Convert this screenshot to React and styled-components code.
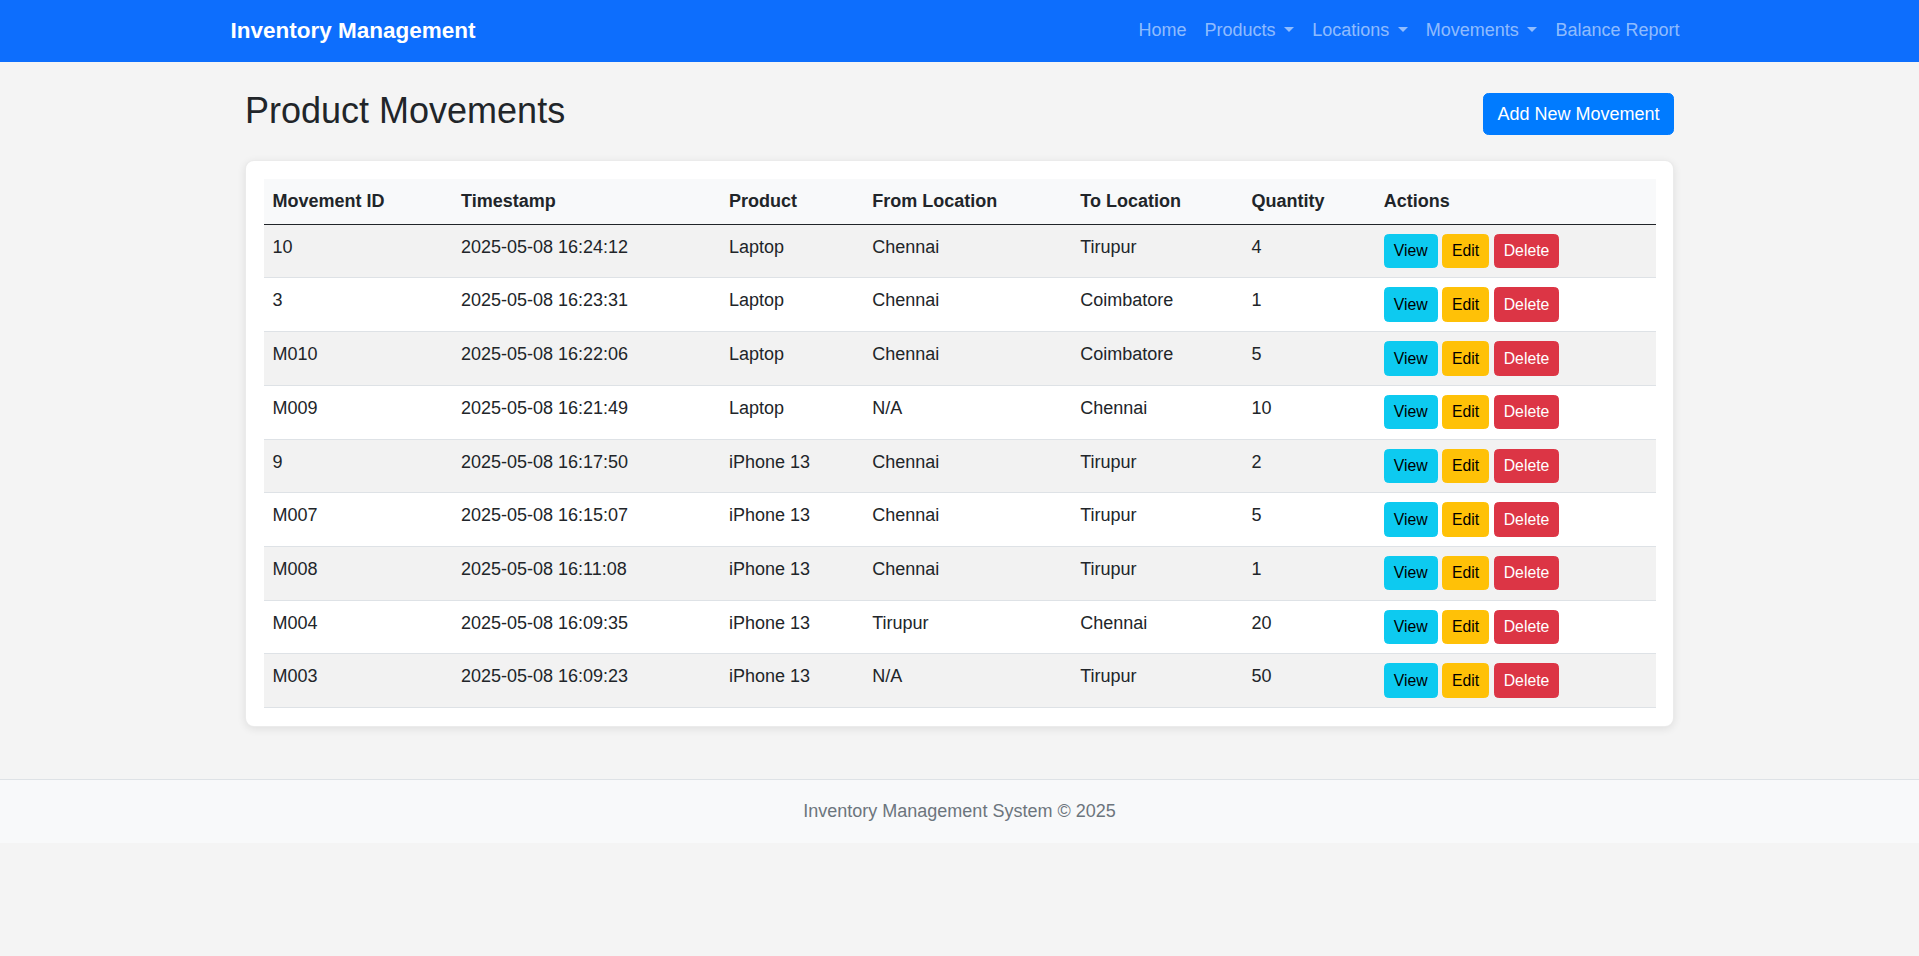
import React from "react";
import styled, { createGlobalStyle } from "styled-components";

const GlobalStyle = createGlobalStyle`
  html, body {
    margin: 0;
    padding: 0;
    background: #f4f4f4;
  }
  body {
    font-family: "Liberation Sans", Arial, sans-serif;
    font-size: 18px;
    line-height: 1.5;
    color: #212529;
  }
  * { box-sizing: border-box; }
`;

const NavBar = styled.nav`
  background: #0d6efd;
  height: 61.6px;
  display: flex;
  align-items: center;
`;

const NavInner = styled.div`
  width: 1485px;
  margin: 0 auto;
  padding: 0 13.5px;
  display: flex;
  align-items: center;
  justify-content: space-between;
`;

const Brand = styled.a`
  color: #fff;
  font-size: 22.5px;
  font-weight: 700;
  line-height: 33.75px;
  padding: 5px 0;
  text-decoration: none;
`;

const NavList = styled.ul`
  list-style: none;
  margin: 0;
  padding: 0;
  display: flex;
`;

const NavLink = styled.a`
  display: block;
  padding: 9px;
  font-size: 18px;
  line-height: 27px;
  color: rgba(255, 255, 255, 0.55);
  text-decoration: none;
  ${(p) =>
    p.$dropdown &&
    `
    &::after {
      content: "";
      display: inline-block;
      margin-left: 8.6px;
      vertical-align: 0.255em;
      border-top: 0.3em solid;
      border-right: 0.3em solid transparent;
      border-left: 0.3em solid transparent;
      border-bottom: 0;
    }
  `}
`;

const Main = styled.main`
  width: 1456px;
  margin: 0 auto;
  padding: 0 13.5px;
`;

const HeaderRow = styled.div`
  margin-top: 27.6px;
  margin-bottom: 24.8px;
  display: flex;
  justify-content: space-between;
  align-items: flex-start;
`;

const Title = styled.h2`
  margin: 0;
  font-size: 36px;
  line-height: 43.2px;
  font-weight: 500;
  color: #212529;
`;

const PrimaryButton = styled.button`
  margin-top: 4.2px;
  font-family: inherit;
  font-size: 18px;
  line-height: 27px;
  padding: 6.5px 13.5px;
  border: 1.1px solid #007bff;
  border-radius: 5.5px;
  background: #007bff;
  color: #fff;
  cursor: pointer;
`;

const Card = styled.div`
  background: #fff;
  border: 1px solid rgba(0, 0, 0, 0.08);
  border-radius: 9px;
  box-shadow: 0 2px 8px rgba(0, 0, 0, 0.09);
  padding: 17.6px;
`;

const Table = styled.table`
  width: 100%;
  border-collapse: collapse;
  table-layout: fixed;
  vertical-align: top;
`;

const HeadCell = styled.th`
  text-align: left;
  font-weight: 700;
  padding: 9px;
  line-height: 27px;
  background: #f8f9fa;
  border-bottom: 1px solid #212529;
`;

const Row = styled.tr`
  background: ${(p) => (p.$striped ? "#f2f2f2" : "#fff")};
`;

const Cell = styled.td`
  padding: 9px;
  line-height: 27px;
  vertical-align: top;
  border-bottom: 1px solid #dee2e6;
`;

const Actions = styled.div`
  display: flex;
  gap: 4.5px;
  height: 34.7px;
  align-items: flex-start;
`;

const variants = {
  info: { bg: "#0dcaf0", fg: "#000" },
  warning: { bg: "#ffc107", fg: "#000" },
  danger: { bg: "#dc3545", fg: "#fff" },
};

const SmallButton = styled.button`
  font-family: inherit;
  font-size: 15.75px;
  line-height: 23.6px;
  padding: 4.5px 9px;
  border: 1.1px solid ${(p) => variants[p.$variant].bg};
  border-radius: 4.5px;
  background: ${(p) => variants[p.$variant].bg};
  color: ${(p) => variants[p.$variant].fg};
  cursor: pointer;
`;

const Footer = styled.footer`
  margin-top: 52.8px;
  background: #f8f9fa;
  border-top: 1px solid #dee2e6;
  padding: 17.6px 0;
  text-align: center;
  color: #6c757d;
  font-size: 18px;
  line-height: 27px;
`;

const columns = [
  { label: "Movement ID", width: 188.4 },
  { label: "Timestamp", width: 268 },
  { label: "Product", width: 143.2 },
  { label: "From Location", width: 208.1 },
  { label: "To Location", width: 171.3 },
  { label: "Quantity", width: 132.2 },
  { label: "Actions", width: 281.6 },
];

const rows = [
  ["10", "2025-05-08 16:24:12", "Laptop", "Chennai", "Tirupur", "4"],
  ["3", "2025-05-08 16:23:31", "Laptop", "Chennai", "Coimbatore", "1"],
  ["M010", "2025-05-08 16:22:06", "Laptop", "Chennai", "Coimbatore", "5"],
  ["M009", "2025-05-08 16:21:49", "Laptop", "N/A", "Chennai", "10"],
  ["9", "2025-05-08 16:17:50", "iPhone 13", "Chennai", "Tirupur", "2"],
  ["M007", "2025-05-08 16:15:07", "iPhone 13", "Chennai", "Tirupur", "5"],
  ["M008", "2025-05-08 16:11:08", "iPhone 13", "Chennai", "Tirupur", "1"],
  ["M004", "2025-05-08 16:09:35", "iPhone 13", "Tirupur", "Chennai", "20"],
  ["M003", "2025-05-08 16:09:23", "iPhone 13", "N/A", "Tirupur", "50"],
];

export default function App() {
  return (
    <>
      <GlobalStyle />
      <NavBar>
        <NavInner>
          <Brand href="#">Inventory Management</Brand>
          <NavList>
            <li><NavLink href="#">Home</NavLink></li>
            <li><NavLink href="#" $dropdown>Products</NavLink></li>
            <li><NavLink href="#" $dropdown>Locations</NavLink></li>
            <li><NavLink href="#" $dropdown>Movements</NavLink></li>
            <li><NavLink href="#">Balance Report</NavLink></li>
          </NavList>
        </NavInner>
      </NavBar>
      <Main>
        <HeaderRow>
          <Title>Product Movements</Title>
          <PrimaryButton>Add New Movement</PrimaryButton>
        </HeaderRow>
        <Card>
          <Table>
            <colgroup>
              {columns.map((c) => (
                <col key={c.label} style={{ width: c.width }} />
              ))}
            </colgroup>
            <thead>
              <tr>
                {columns.map((c) => (
                  <HeadCell key={c.label}>{c.label}</HeadCell>
                ))}
              </tr>
            </thead>
            <tbody>
              {rows.map((r, i) => (
                <Row key={r[0]} $striped={i % 2 === 0}>
                  {r.map((v, j) => (
                    <Cell key={j}>{v}</Cell>
                  ))}
                  <Cell>
                    <Actions>
                      <SmallButton $variant="info">View</SmallButton>
                      <SmallButton $variant="warning">Edit</SmallButton>
                      <SmallButton $variant="danger">Delete</SmallButton>
                    </Actions>
                  </Cell>
                </Row>
              ))}
            </tbody>
          </Table>
        </Card>
      </Main>
      <Footer>Inventory Management System © 2025</Footer>
    </>
  );
}
